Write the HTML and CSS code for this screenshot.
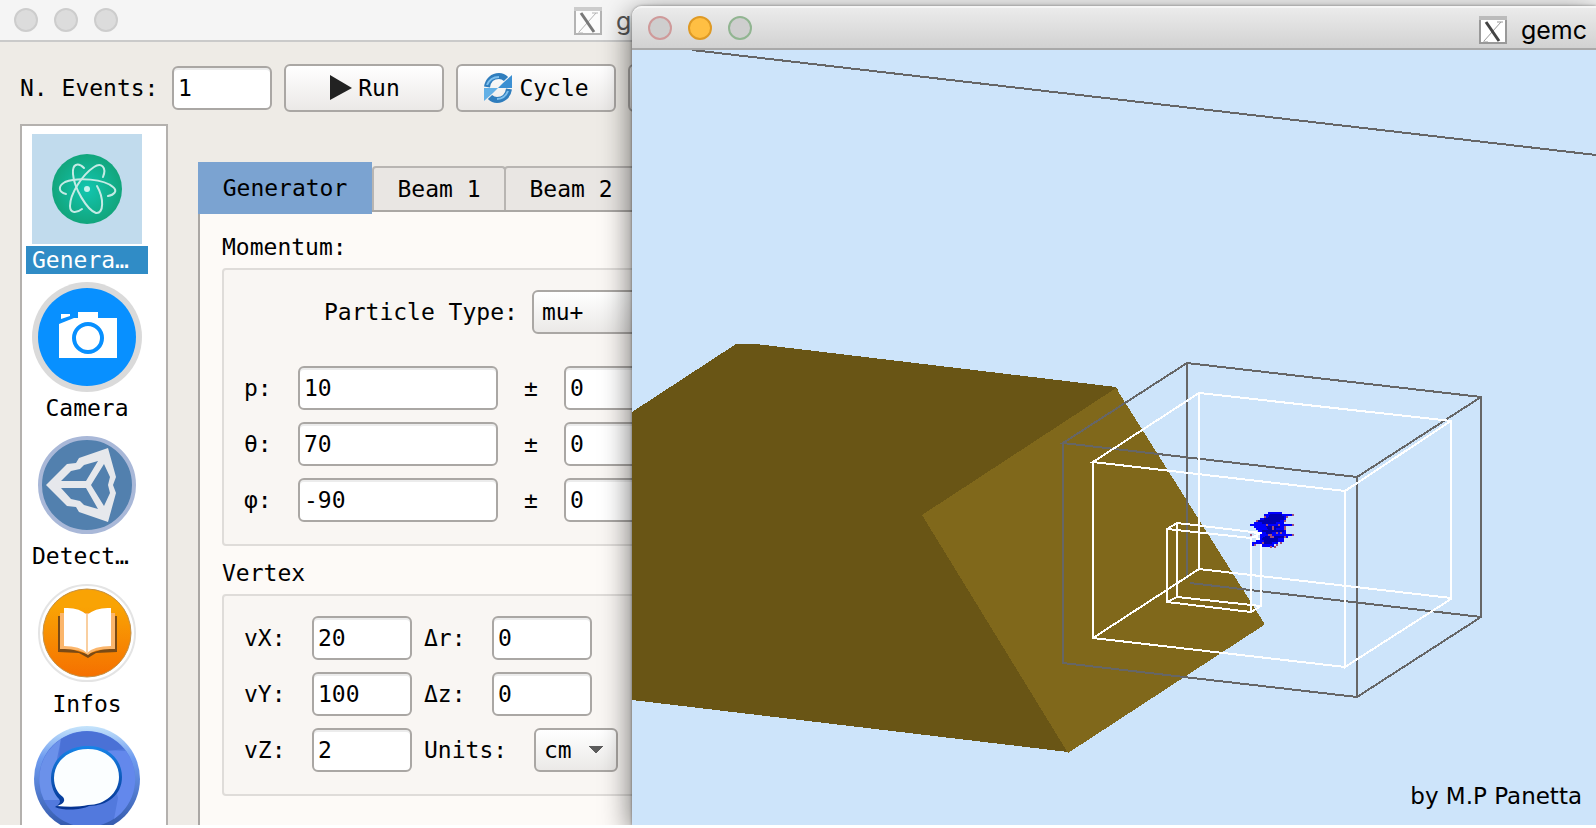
FILE: index.html
```
<!DOCTYPE html>
<html lang="en">
<head>
    <meta charset="UTF-8">
    <meta name="viewport" content="width=device-width, initial-scale=1.0">
    <link rel="stylesheet" href="styles.css">
    <title>gemc</title>
</head>
<body>
<div id="desktop">

    <!-- Main control window -->
    <div class="window main-window">
        <div class="titlebar">
            <span class="dot"></span>
            <span class="dot"></span>
            <span class="dot"></span>
            <div class="title">
                <svg class="x-icon" viewBox="0 0 28 28">
                    <rect x="1" y="1" width="26" height="26" fill="#fff" stroke="#999" stroke-width="2"/>
                    <rect x="0" y="0" width="28" height="4" fill="#bbb"/>
                    <path d="M22 6L5 25M4 26H9M18 6H24" stroke="#999" stroke-width="1"/>
                    <path d="M7 6L20 25" stroke="#444" stroke-width="3"/>
                </svg>
                gemc
            </div>
        </div>

        <form class="toolbar" onsubmit="return false">
            <label for="events">N. Events:</label>
            <input class="short" type="text" id="events" value="1">
            <button type="submit">
                <svg width="24" height="28" viewBox="0 0 24 28"><path d="M2 1L24 14L2 26Z" fill="#222"/></svg>Run
            </button>
            <button type="button">
                <svg width="30" height="32" viewBox="0 0 30 32">
                    <path d="M4 15C5 8 10 4 16 4C19 4 21 5 23 7" fill="none" stroke="#2f7dbd" stroke-width="6"/>
                    <path d="M29 3V16H15L20 11Z" fill="#3b8fd2"/>
                    <path d="M26 17C25 24 20 28 14 28C11 28 9 27 7 25" fill="none" stroke="#2f7dbd" stroke-width="6"/>
                    <path d="M1 29V16H15L10 21Z" fill="#63b0e6"/>
                    <path d="M4 13C6 8 10 5 16 5M25 19C23 24 20 27 14 27" fill="none" stroke="#7fc0ee" stroke-width="2"/>
                </svg>Cycle
            </button>
            <button type="button">Stop</button>
        </form>

        <div class="content">
            <ul class="sidebar">
                <li>
                    <a href="#" class="selected">
                        <svg viewBox="0 0 110 110">
                            <defs>
                                <radialGradient id="green"><stop offset="0" stop-color="#12c6b0"/><stop offset="1" stop-color="#12a57c"/></radialGradient>
                            </defs>
                            <circle cx="55" cy="55" r="35" fill="url(#green)"/>
                            <g fill="none" stroke="#c5ebe5" stroke-width="2" stroke-linecap="round">
                                <path d="M34 60C26 58 26 52 33 48C46 43 72 45 81 53C86 57 82 61 76 62"/>
                                <path d="M71 43C75 33 69 28 62 33C50 41 38 60 38 72C38 80 45 79 50 75"/>
                                <path d="M52 34C46 28 40 30 41 40C42 54 55 76 64 79C72 80 72 64 65 52"/>
                            </g>
                            <circle cx="55" cy="55" r="3" fill="#c5f3ee"/>
                        </svg>
                        <span class="elided">Genera…</span>
                    </a>
                </li>
                <li>
                    <a href="#">
                        <svg viewBox="0 0 110 110">
                            <circle cx="55" cy="55" r="55" fill="#dadada"/>
                            <circle cx="55" cy="55" r="49" fill="#0890ff"/>
                            <path d="M27 42L42 36H46V30H66V36H85V76H27Z" fill="#fff"/>
                            <path d="M29 32H38V34L29 37Z" fill="#fff"/>
                            <circle cx="56" cy="56" r="14" fill="#fff" stroke="#0890ff" stroke-width="4"/>
                        </svg>
                        <span>Camera</span>
                    </a>
                </li>
                <li>
                    <a href="#">
                        <svg viewBox="0 0 110 110">
                            <circle cx="55" cy="55" r="47" fill="#5280ae" stroke="#a9b8d8" stroke-width="4"/>
                            <path fill="#e6e8ec" fill-rule="evenodd" d="M14 55L35 34L44 33L47 28L76 18L84 47L81 55L84 63L76 92L47 82L44 77L35 76Z
                                M29 51L39 41L48 39L52 35L66 31L54 51Z M29 58L39 69L48 71L52 75L66 79L54 58Z M72 34L59 55L72 76L78 63L76 55L78 47Z"/>
                        </svg>
                        <span class="elided">Detect…</span>
                    </a>
                </li>
                <li>
                    <a href="#">
                        <svg viewBox="0 0 110 110">
                            <defs>
                                <linearGradient id="orange" x2="0" y2="1"><stop offset=".2" stop-color="#f9a304"/><stop offset="1" stop-color="#f57000"/></linearGradient>
                            </defs>
                            <circle cx="55" cy="55" r="48" fill="#fff" stroke="#e4e4e4" stroke-width="2"/>
                            <circle cx="55" cy="55" r="44" fill="url(#orange)" stroke="#c39045" stroke-width="1"/>
                            <path d="M26 38H32V69L55 76L79 69V38H85V74L64 75L56 80L47 75L26 74Z" fill="#7a4a15"/>
                            <path d="M28 35H83V71Q62 70 56 77Q48 70 28 71Z" fill="#fbb66c"/>
                            <path d="M32 30Q47 29 55 37Q64 29 79 30V68Q62 68 55 75Q48 68 32 68Z" fill="#fff"/>
                            <path d="M55 37V75" stroke="#f9cfa0" stroke-width="2"/>
                        </svg>
                        <span>Infos</span>
                    </a>
                </li>
                <li>
                    <a href="#" aria-label="Messages">
                        <svg viewBox="0 0 110 110">
                            <defs>
                                <linearGradient id="ring" x2="0" y2="1"><stop offset="0" stop-color="#c5e4fb"/><stop offset=".3" stop-color="#6f9cf0"/><stop offset="1" stop-color="#3055a8"/></linearGradient>
                                <linearGradient id="rim" x2="0" y2="1"><stop offset="0" stop-color="#1684e8"/><stop offset="1" stop-color="#05318f"/></linearGradient>
                            </defs>
                            <circle cx="55" cy="53" r="53" fill="url(#ring)"/>
                            <circle cx="55" cy="53" r="48" fill="#5279dd"/>
                            <path d="M29 13A48 48 0 0 0 12 74L28 74L22 48Z" fill="#6b91ea"/>
                            <path d="M75 24L94 25A48 48 0 0 1 82 93L86 72Z" fill="#6388ec"/>
                            <path d="M29 13A48 48 0 0 1 92 23L74 25L27 33Z" fill="#4a71d6"/>
                            <path d="M56 20C77 20 90 34 90 51C90 69 75 80 57 80C50 84 32 85 23 81C28 78 29 76 27 73C22 68 19 60 19 52C19 34 34 20 56 20Z" fill="url(#rim)"/>
                            <path d="M56 23C75 23 87 36 87 51C87 67 73 79 56 79C48 81 36 81 25 80C31 78 34 75 31 71C25 67 22 60 22 52C22 36 36 23 56 23Z" fill="#fbfeff"/>
                        </svg>
                    </a>
                </li>
            </ul>

            <div class="main">
                <div class="tabs">
                    <button type="button" class="tab active">Generator</button>
                    <button type="button" class="tab">Beam 1</button>
                    <button type="button" class="tab">Beam 2</button>
                </div>
                <form class="pane">
                    <h2>Momentum:</h2>
                    <div class="group">
                        <div class="row particle">
                            <label for="particle">Particle Type:</label>
                            <select id="particle"><option>mu+</option><option>mu-</option></select>
                        </div>
                        <div class="row">
                            <label class="var" for="p">p:</label>
                            <input type="text" id="p" value="10">
                            <label class="pm" for="dp">±</label>
                            <input type="text" id="dp" value="0">
                        </div>
                        <div class="row">
                            <label class="var" for="theta">θ:</label>
                            <input type="text" id="theta" value="70">
                            <label class="pm" for="dtheta">±</label>
                            <input type="text" id="dtheta" value="0">
                        </div>
                        <div class="row">
                            <label class="var" for="phi">φ:</label>
                            <input type="text" id="phi" value="-90">
                            <label class="pm" for="dphi">±</label>
                            <input type="text" id="dphi" value="0">
                        </div>
                    </div>

                    <h2>Vertex</h2>
                    <div class="group">
                        <div class="row">
                            <label class="axis" for="vx">vX:</label>
                            <input class="short" type="text" id="vx" value="20">
                            <label class="axis delta" for="dr">Δr:</label>
                            <input class="short" type="text" id="dr" value="0">
                        </div>
                        <div class="row">
                            <label class="axis" for="vy">vY:</label>
                            <input class="short" type="text" id="vy" value="100">
                            <label class="axis delta" for="dz">Δz:</label>
                            <input class="short" type="text" id="dz" value="0">
                        </div>
                        <div class="row">
                            <label class="axis" for="vz">vZ:</label>
                            <input class="short" type="text" id="vz" value="2">
                            <label class="units" for="units">Units:</label>
                            <select id="units" class="with-arrow"><option>cm</option><option>mm</option></select>
                        </div>
                    </div>
                </form>
            </div>
        </div>
    </div>

    <!-- Strip of the window behind the viewer -->
    <div class="behind"></div>

    <!-- Detector viewer window -->
    <div class="window viewer">
        <div class="titlebar">
            <span class="dot close"></span>
            <span class="dot minimize"></span>
            <span class="dot zoom"></span>
            <div class="title">
                <svg class="x-icon" viewBox="0 0 28 28">
                    <rect x="1" y="1" width="26" height="26" fill="#fff" stroke="#999" stroke-width="2"/>
                    <rect x="0" y="0" width="28" height="4" fill="#bbb"/>
                    <path d="M22 6L5 25M4 26H9M18 6H24" stroke="#999" stroke-width="1"/>
                    <path d="M7 6L20 25" stroke="#444" stroke-width="3"/>
                </svg>
                gemc
            </div>
        </div>
        <div class="scene">
            <svg viewBox="632 50 964 775" preserveAspectRatio="xMinYMin slice" shape-rendering="crispEdges">
                <!-- solid block -->
                <path d="M632 412L736 344H756L1116 387L1118 390L1068 752L632 700Z" fill="#695515"/>
                <path d="M1116 388L1264 623V625L1068 753L922 515Z" fill="#80681b"/>
                <!-- outer volume -->
                <g fill="none" stroke="#666" stroke-width="2">
                    <path d="M692 50L1596 155"/>
                    <path d="M1187 363L1481 397V617L1357 697V477L1481 397"/>
                    <path d="M1187 363L1063 443L1357 477"/>
                    <path d="M1063 443V663L1357 697"/>
                    <path d="M1187 363V579"/>
                    <path d="M1190 583L1481 617"/>
                </g>
                <!-- inner volume and paddle -->
                <g fill="none" stroke="#fff" stroke-width="2">
                    <path d="M1199 393L1451 421V599L1345 667V491L1451 421"/>
                    <path d="M1199 393L1093 462L1345 491"/>
                    <path d="M1093 462V638L1345 667"/>
                    <path d="M1093 638L1199 569V393"/>
                    <path d="M1199 569L1451 598"/>
                    <path d="M1167 529L1251 538V612L1167 602Z"/>
                    <path d="M1177 523L1261 533V606L1177 597Z"/>
                    <path d="M1167 529L1177 523M1251 538L1261 533M1251 612L1261 606M1167 602L1177 597"/>
                </g>
                <!-- hits -->
                <path fill="#00f" d="M1268 512H1282V514H1292V516H1288V518H1286V522H1284V524H1292V526H1286V528H1284V530H1286V534H1292V536H1288V538H1284V542H1278V544H1274V547H1262V544H1260V534H1256V532H1258V530H1256V528H1254V526H1250V524H1254V522H1256V520H1260V518H1264V514H1268Z"/>
                <path fill="#00f" d="M1252 546V542H1256V540H1260V544H1256V546Z"/>
                <path fill="#0000b0" d="M1270 514H1282V516H1284V520H1280V522H1276V524H1262V522H1258V520H1264V518H1268ZM1266 526H1280V528H1276V530H1284V532H1272V534H1266V532H1262V530H1268ZM1266 536H1284V538H1278V542H1272V544H1264V540H1262V538Z"/>
                <path stroke="#a0507a" stroke-width="2" d="M1292 515h2M1286 517h2M1264 517h2M1256 521h2M1284 521h2M1292 525h2M1266 525h2M1278 525h2M1284 527h2M1272 527h2M1272 529h2M1284 529h2M1276 533h2M1280 533h2M1250 535h2M1268 535h4M1292 535h2M1270 537h4M1284 537h2M1262 543h2M1280 543h2M1254 545h2M1276 545h2M1270 547h2M1274 547h2"/>
                <path stroke="#fff" stroke-width="2" d="M1254 533h8M1254 537h4M1256 539h4"/>
            </svg>
            <p class="credit">by M.P Panetta</p>
        </div>
    </div>

</div>
</body>
</html>
```

FILE: styles.css
```
* {
    box-sizing: border-box;
}

body {
    margin: 0;
    background: #fff;
    font-family: "DejaVu Sans Mono", monospace;
    font-size: 23px;
    color: #000;
}

#desktop {
    position: relative;
    height: calc(100vh - 3px);
    overflow: hidden;
}

/* Windows */
.window {
    display: flex;
    flex-direction: column;
}

.main-window {
    height: 100%;
    background: #eeebe6;
}

.titlebar {
    display: flex;
    align-items: center;
    flex: none;
    gap: 16px;
    height: 42px;
    padding-left: 14px;
    background: #f5f5f5;
    border-bottom: 2px solid #cacaca;
}

.dot {
    width: 24px;
    height: 24px;
    border-radius: 50%;
    background: #dcdcdc;
    border: 2px solid #cdcdcd;
}

.title {
    display: flex;
    align-items: center;
    gap: 14px;
    font-family: Inter, sans-serif;
    font-size: 25px;
}

.main-window .title {
    margin-left: 440px;
    padding-top: 2px;
    color: #555;
}

.main-window .x-icon {
    opacity: 0.7;
}

.x-icon {
    width: 28px;
    height: 28px;
}

/* The viewer lies over the main window */
.viewer {
    position: absolute;
    left: 39.6%;
    right: 0;
    top: 6px;
    bottom: 0;
    border-top-left-radius: 10px;
    box-shadow: 0 8px 30px rgba(0, 0, 0, 0.6), 0 0 3px rgba(0, 0, 0, 0.4);
}

.viewer .titlebar {
    height: 44px;
    padding-left: 16px;
    padding-right: 9px;
    background: linear-gradient(#ebebeb, #d2d2d2);
    border-top: 2px solid #f5f5f5;
    border-bottom: 2px solid #a9a9a9;
    border-top-left-radius: 10px;
}

.viewer .title {
    margin-left: auto;
    padding-top: 3px;
}

.viewer .dot {
    background: #cecece;
}

.viewer .close {
    border-color: #cf9a9a;
}

.viewer .minimize {
    background: #ffbf43;
    border-color: #df9a25;
}

.viewer .zoom {
    border-color: #91b591;
}

.behind {
    position: absolute;
    left: 39.6%;
    right: 0;
    top: 0;
    height: 20px;
    background: #f5f5f5;
}

.scene {
    position: relative;
    flex: 1;
    min-height: 0;
    background: #cde4fa;
}

.scene svg {
    display: block;
    width: 100%;
    height: 100%;
}

.credit {
    position: absolute;
    right: 14px;
    bottom: 14px;
    margin: 0;
    font-family: "DejaVu Sans", sans-serif;
    font-size: 23px;
    line-height: 30px;
}

/* Controls */
input,
select,
button {
    font: inherit;
    color: #000;
    border: 2px solid #aaa7a4;
    border-radius: 6px;
}

input,
select {
    flex: none;
    width: 200px;
    height: 44px;
    padding: 0 4px;
    background: #fff;
}

input {
    box-shadow: inset 0 2px 0 #ececec;
}

input.short {
    width: 100px;
}

button,
select {
    background: linear-gradient(#fff, #ebe9e7);
}

select {
    appearance: none;
    padding: 0 8px;
}

select.with-arrow {
    width: 84px;
    background:
        linear-gradient(to top right, transparent 50%, #5c5c5c 50%) 52px 16px / 8px 8px no-repeat,
        linear-gradient(to top left, transparent 50%, #5c5c5c 50%) 60px 16px / 8px 8px no-repeat,
        linear-gradient(#fff, #ebe9e7);
}

/* Toolbar */
.toolbar {
    display: flex;
    align-items: center;
    gap: 12px;
    padding: 22px 20px 12px;
}

.toolbar label {
    width: 140px;
}

.toolbar button {
    display: flex;
    align-items: center;
    justify-content: center;
    gap: 6px;
    flex: none;
    width: 160px;
    height: 48px;
    padding: 0;
}

.content {
    display: flex;
    flex: 1;
    gap: 30px;
    min-height: 0;
    padding-left: 20px;
}

/* Sidebar */
.sidebar {
    flex: none;
    width: 148px;
    margin: 0;
    padding: 8px 4px;
    list-style: none;
    background: #fff;
    border: 2px solid #b4b1ae;
    border-bottom: none;
    overflow: hidden;
}

.sidebar li {
    width: 122px;
    margin-bottom: 8px;
}

.sidebar a {
    display: flex;
    flex-direction: column;
    align-items: center;
    gap: 2px;
    color: #000;
    text-decoration: none;
}

.sidebar svg {
    width: 110px;
    height: 110px;
}

.sidebar span {
    width: 100%;
    height: 28px;
    line-height: 28px;
    text-align: center;
}

.sidebar .elided {
    padding-left: 6px;
    text-align: left;
}

.sidebar .selected svg {
    background: #c1dbed;
}

.sidebar .selected span {
    background: #308cc6;
    color: #fff;
}

/* Tabs */
.main {
    display: flex;
    flex-direction: column;
    flex: 1;
    padding-top: 38px;
}

.tabs {
    display: flex;
    align-items: flex-end;
    height: 48px;
}

.tab {
    width: 134px;
    height: 44px;
    padding: 0;
    background: #e9e6e3;
    border-color: #b8b5b2;
    border-bottom: none;
    border-radius: 4px 4px 0 0;
    margin-right: -2px;
}

.tab.active {
    z-index: 1;
    width: 174px;
    height: 52px;
    margin: 0 0 -4px;
    background: #7ba3d1;
    border: none;
    border-radius: 0;
}

.pane {
    flex: 1;
    padding: 8px 22px;
    background: #fdfaf7;
    border: 2px solid #aaa7a4;
    border-bottom: none;
}

.pane h2 {
    margin: 6px 0 0;
    font-size: 23px;
    font-weight: normal;
    line-height: 42px;
}

.group {
    display: flex;
    flex-direction: column;
    gap: 12px;
    padding: 20px 20px 22px;
    background: #f9f6f3;
    border: 2px solid #dfdcd9;
    border-radius: 4px;
}

.row {
    display: flex;
    align-items: center;
}

.particle {
    gap: 14px;
    margin-bottom: 20px;
    padding-left: 80px;
}

.var {
    width: 54px;
}

.pm {
    width: 66px;
    text-align: center;
}

.axis {
    width: 68px;
}

.delta {
    width: 80px;
    padding-left: 12px;
}

.units {
    width: 122px;
    padding-left: 12px;
}
```
